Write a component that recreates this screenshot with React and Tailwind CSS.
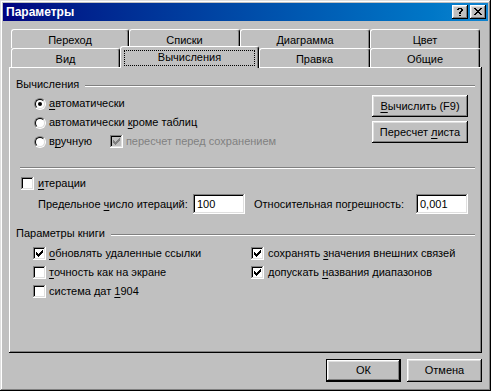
import React from "react";

const raised =
  "shadow-[inset_-1px_-1px_0_#000,inset_1px_1px_0_#fff,inset_-2px_-2px_0_#808080,inset_2px_2px_0_#dfdfdf]";
const sunken =
  "shadow-[inset_-1px_-1px_0_#fff,inset_1px_1px_0_#808080,inset_-2px_-2px_0_#dfdfdf,inset_2px_2px_0_#000]";

const CHECK =
  "M9 3h1v1h-1z M8 4h2v1h-2z M3 5h1v1h-1z M7 5h3v1h-3z M3 6h2v1h-2z M6 6h3v1h-3z M3 7h5v1h-5z M4 8h3v1h-3z M5 9h1v1h-1z";

function Check({ checked, disabled }) {
  return (
    <div
      className={`w-[13px] h-[13px] shrink-0 ${disabled ? "bg-[#c0c0c0]" : "bg-white"} ${sunken}`}
    >
      {checked && (
        <svg width="13" height="13" className="block" shapeRendering="crispEdges">
          <path d={CHECK} fill={disabled ? "#808080" : "#000"} />
        </svg>
      )}
    </div>
  );
}

function Radio({ on }) {
  return (
    <div className="w-[12px] h-[12px] shrink-0 rounded-full border border-t-[#808080] border-l-[#808080] border-r-white border-b-white">
      <div className="w-full h-full rounded-full border border-t-black border-l-black border-r-[#dfdfdf] border-b-[#dfdfdf] bg-white flex items-center justify-center">
        {on && <div className="w-[4px] h-[4px] rounded-full bg-black" />}
      </div>
    </div>
  );
}

function Tab({ className, children }) {
  return (
    <div
      className={`h-full flex items-start justify-center pt-[4px] border-l border-t border-r border-l-white border-t-white border-r-black rounded-t-[3px] shadow-[inset_-1px_0_0_#808080] ${className}`}
    >
      {children}
    </div>
  );
}

function U({ children }) {
  return <span className="underline underline-offset-[2px]">{children}</span>;
}

function Header({ children }) {
  return (
    <div className="flex h-[13px]">
      <span>{children}</span>
      <div className="flex-1 ml-[6px] mt-[7px] h-[2px] border-t border-b border-t-[#808080] border-b-white" />
    </div>
  );
}

function TitleBtn({ d, w, h, x, y }) {
  return (
    <div className={`w-[16px] h-[14px] bg-[#c0c0c0] ${raised}`}>
      <svg width="16" height="14" className="block" shapeRendering="crispEdges">
        <path d={d} fill="#000" transform={`translate(${x} ${y})`} />
      </svg>
    </div>
  );
}

const HELP =
  "M1 0h4v1h-4z M0 1h2v1h-2z M4 1h2v1h-2z M4 2h2v1h-2z M3 3h2v1h-2z M2 4h2v1h-2z M2 5h2v1h-2z M2 7h2v1h-2z";
const CLOSE =
  "M0 0h2v1h-2z M6 0h2v1h-2z M1 1h2v1h-2z M5 1h2v1h-2z M2 2h4v1h-4z M3 3h2v1h-2z M2 4h4v1h-4z M1 5h2v1h-2z M5 5h2v1h-2z M0 6h2v1h-2z M6 6h2v1h-2z";

export default function App() {
  return (
    <div className="w-[491px] h-[391px] bg-[#c0c0c0] p-[3px] flex flex-col text-black text-[11px] leading-[13px] font-['Liberation_Sans',Arial,sans-serif] shadow-[inset_-1px_-1px_0_#000,inset_1px_1px_0_#dfdfdf,inset_-2px_-2px_0_#808080,inset_2px_2px_0_#fff]">
      {/* title bar */}
      <div className="h-[18px] shrink-0 flex items-center bg-linear-to-r from-[#000080] to-[#1084d0] pl-[3px] pr-[2px]">
        <span className="flex-1 text-white font-bold text-[12px] leading-[14px]">Параметры</span>
        <div className="flex gap-[2px]">
          <TitleBtn d={HELP} x={5} y={3} />
          <TitleBtn d={CLOSE} x={4} y={3} />
        </div>
      </div>

      {/* tabs */}
      <div className="mt-[8px] pl-[8px] flex flex-col">
        <div className="h-[19px] flex">
          <Tab className="w-[118px]">Переход</Tab>
          <Tab className="w-[111px]">Списки</Tab>
          <Tab className="w-[130px]">Диаграмма</Tab>
          <Tab className="w-[110px]">Цвет</Tab>
        </div>
        <div className="h-[19px] flex items-end">
          <Tab className="w-[109px]">Вид</Tab>
          <div className="relative z-10 w-[139px] h-[22px] mb-[-1px] bg-[#c0c0c0] pt-[3px] pl-[3px] pr-[3px] border-l border-t border-r border-l-white border-t-white border-r-black rounded-t-[3px] shadow-[inset_-1px_0_0_#808080]">
            <div className="h-[16px] border border-dotted border-black flex items-start justify-center">
              Вычисления
            </div>
          </div>
          <Tab className="w-[111px]">Правка</Tab>
          <Tab className="w-[110px]">Общие</Tab>
        </div>
      </div>

      {/* panel */}
      <div className="mx-[6px] h-[286px] shrink-0 px-[7px] flex flex-col shadow-[inset_-1px_-1px_0_#000,inset_1px_1px_0_#fff,inset_-2px_-2px_0_#808080]">
        <div className="mt-[11px]">
          <Header>Вычисления</Header>
        </div>

        <div className="mt-[3px] flex">
          <div className="flex flex-col pl-[18px]">
            <div className="h-[19px] flex items-center">
              <Radio on />
              <span className="ml-[3px]">
                <U>а</U>втоматически
              </span>
            </div>
            <div className="h-[19px] flex items-center">
              <Radio />
              <span className="ml-[3px]">
                автоматически <U>к</U>роме таблиц
              </span>
            </div>
            <div className="h-[19px] flex items-center">
              <Radio />
              <span className="ml-[3px]">
                в<U>р</U>учную
              </span>
              <div className="ml-[18px]">
                <Check checked disabled />
              </div>
              <span className="ml-[3px] text-[#808080]">пересчет перед сохранением</span>
            </div>
          </div>
          <div className="ml-auto mr-[7px] mt-[1px] flex flex-col gap-[4px]">
            <div className={`w-[96px] h-[22px] flex items-center justify-center ${raised}`}>
              <span>
                <U>В</U>ычислить (F9)
              </span>
            </div>
            <div className={`w-[96px] h-[22px] flex items-center justify-center ${raised}`}>
              <span>
                Пересчет <U>л</U>иста
              </span>
            </div>
          </div>
        </div>

        <div className="mt-[16px] ml-[4px] h-[2px] border-t border-b border-t-[#808080] border-b-white" />

        <div className="mt-[5px] h-[19px] flex items-center pl-[5px]">
          <Check />
          <span className="ml-[4px]">
            <U>и</U>терации
          </span>
        </div>

        <div className="mt-[1px] h-[20px] flex items-center pl-[22px]">
          <span className="w-[155px] shrink-0">
            Предельное <U>ч</U>исло итераций:
          </span>
          <div className={`w-[52px] h-[20px] bg-white pl-[4px] flex items-center ${sunken}`}>100</div>
          <span className="ml-[9px] w-[162px] shrink-0">
            Относительная по<U>г</U>решность:
          </span>
          <div className={`w-[52px] h-[20px] bg-white pl-[4px] flex items-center ${sunken}`}>0,001</div>
        </div>

        <div className="mt-[13px]">
          <Header>Параметры книги</Header>
        </div>

        <div className="mt-[4px] flex">
          <div className="w-[235px] pl-[17px] flex flex-col">
            <div className="h-[19px] flex items-center">
              <Check checked />
              <span className="ml-[3px]">
                <U>о</U>бновлять удаленные ссылки
              </span>
            </div>
            <div className="h-[19px] flex items-center">
              <Check />
              <span className="ml-[3px]">
                <U>т</U>очность как на экране
              </span>
            </div>
            <div className="h-[19px] flex items-center">
              <Check />
              <span className="ml-[3px]">
                система дат <U>1</U>904
              </span>
            </div>
          </div>
          <div className="flex flex-col">
            <div className="h-[19px] flex items-center">
              <Check checked />
              <span className="ml-[4px]">
                сохранять <U>з</U>начения внешних связей
              </span>
            </div>
            <div className="h-[19px] flex items-center">
              <Check checked />
              <span className="ml-[4px]">
                допускать <U>н</U>азвания диапазонов
              </span>
            </div>
          </div>
        </div>
      </div>

      {/* bottom buttons */}
      <div className="mt-[6px] h-[23px] flex justify-end gap-[6px] pr-[6px]">
        <div className={`w-[75px] h-[23px] border border-black flex items-center justify-center ${raised}`}>
          ОК
        </div>
        <div className={`w-[75px] h-[23px] flex items-center justify-center ${raised}`}>Отмена</div>
      </div>
    </div>
  );
}
